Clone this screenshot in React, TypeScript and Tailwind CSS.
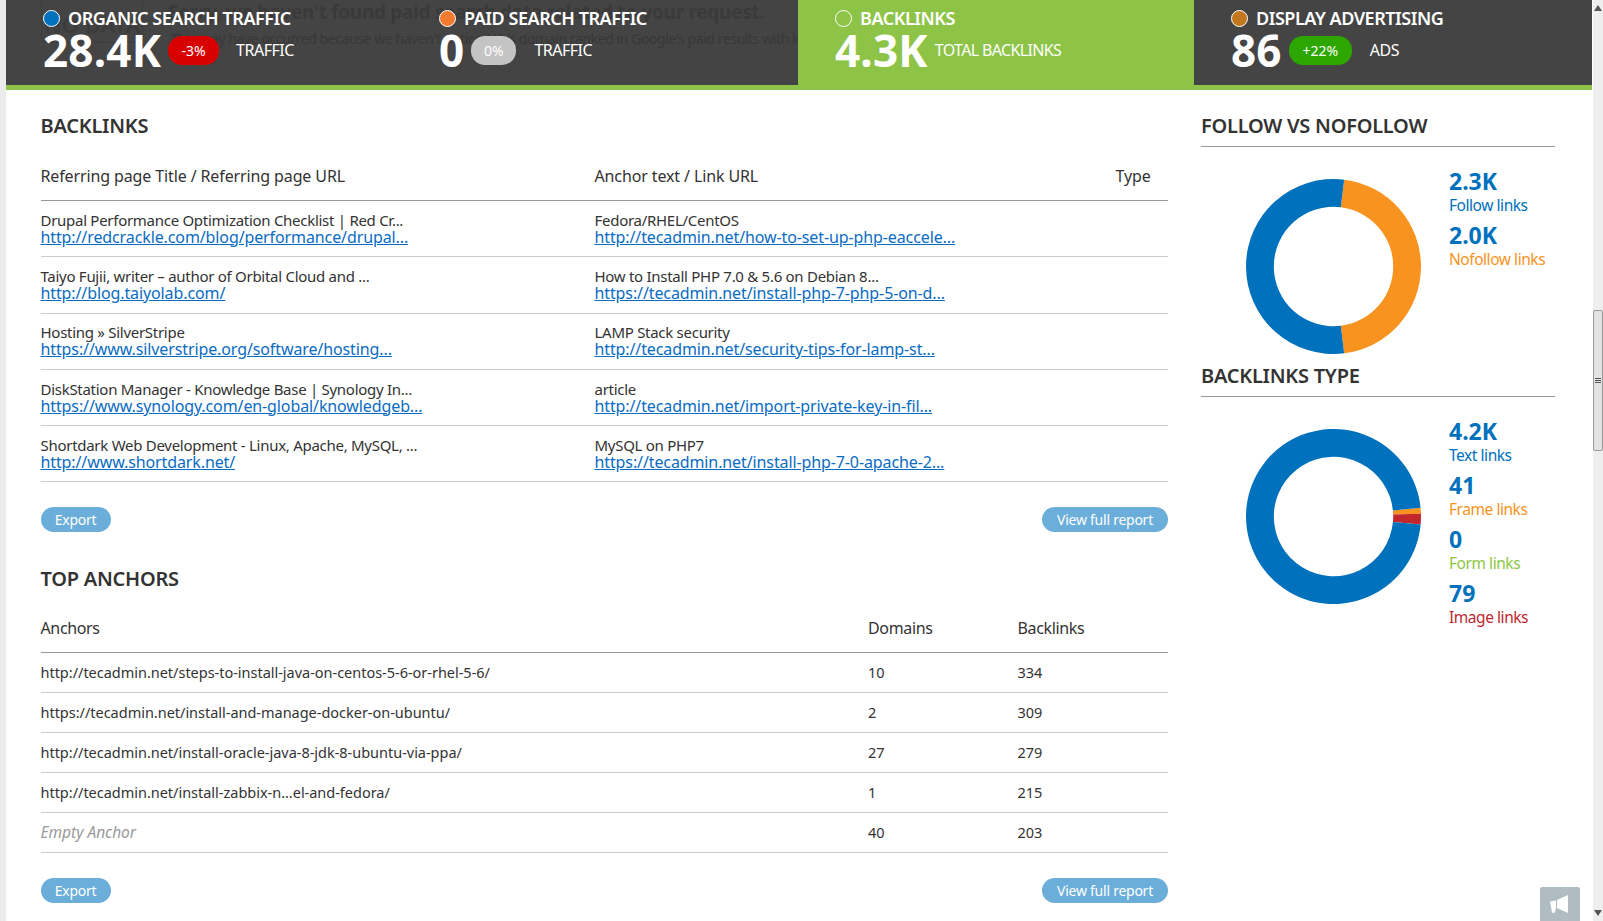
import React from "react";

function pt(cx: number, cy: number, r: number, deg: number) {
  const a = ((deg - 90) * Math.PI) / 180;
  return [cx + r * Math.cos(a), cy + r * Math.sin(a)];
}
function arc(from: number, to: number) {
  const c = 87.5, R = 87.5, r = 59.7;
  const large = to - from > 180 ? 1 : 0;
  const [a, b] = pt(c, c, R, from);
  const [d, e] = pt(c, c, R, to);
  const [f, g] = pt(c, c, r, to);
  const [h, i] = pt(c, c, r, from);
  return `M${a} ${b}A${R} ${R} 0 ${large} 1 ${d} ${e}L${f} ${g}A${r} ${r} 0 ${large} 0 ${h} ${i}Z`;
}
function Donut({ slices }: { slices: [number, number, string][] }) {
  return (
    <svg width="175" height="175" viewBox="0 0 175 175" className="ml-[45px] mt-[32px] shrink-0">
      {slices.map(([a, b, c], i) => <path key={i} d={arc(a, b)} fill={c} />)}
    </svg>
  );
}

function Cell({ dot, label, value, badge, badgeCls, sub, active, subCls }: { dot: string; label: string; value: string; badge?: string; badgeCls?: string; sub: string; active?: boolean; subCls: string }) {
  return (
    <div className={`relative h-[85px] pl-[37px] text-white ${active ? "bg-[#8dc447]" : ""}`}>
      <div className="flex h-[34px] items-center pt-[1px]">
        <span className="h-[17px] w-[17px] translate-y-[1px] rounded-full border border-white" style={{ backgroundColor: dot }} />
        <span className="ml-[8px] text-[18px] font-semibold leading-none tracking-[-0.46px]">{label}</span>
      </div>
      <div className="flex h-[32px] items-center">
        <span className="text-[44px] font-bold leading-none tracking-[0.2px]">{value}</span>
        {badge ? <span className={`ml-[7px] flex h-[29px] items-center justify-center rounded-[14px] text-[14px] ${badgeCls}`}>{badge}</span> : null}
        <span className={`text-[16px] ${subCls}`}>{sub}</span>
      </div>
    </div>
  );
}

function H2({ children, rule }: { children: React.ReactNode; rule?: boolean }) {
  return (
    <h2 className={`text-[20px] font-semibold leading-[28px] tracking-[-0.25px] text-[#333] ${rule ? "h-[35px] border-b border-[#999]" : "h-[28px]"}`}>{children}</h2>
  );
}
function Btn({ children, w }: { children: React.ReactNode; w: string }) {
  return <button className={`flex h-[25px] items-center justify-center rounded-full bg-[#6baed9] text-[14px] tracking-[-0.25px] text-white ${w}`}>{children}</button>;
}
function Stat({ n, label, c }: { n: string; label: string; c: string }) {
  return (
    <div className="h-[54px]">
      <div className="h-[26px] text-[23px] font-bold leading-[26px] text-[#0071bc]">{n}</div>
      <div className={`h-[22px] text-[15.5px] leading-[22px] tracking-[-0.45px] ${c}`}>{label}</div>
    </div>
  );
}

const backlinks = [
  ["Drupal Performance Optimization Checklist | Red Cr...", "http://redcrackle.com/blog/performance/drupal...", "Fedora/RHEL/CentOS", "http://tecadmin.net/how-to-set-up-php-eaccele..."],
  ["Taiyo Fujii, writer – author of Orbital Cloud and ...", "http://blog.taiyolab.com/", "How to Install PHP 7.0 & 5.6 on Debian 8...", "https://tecadmin.net/install-php-7-php-5-on-d..."],
  ["Hosting » SilverStripe", "https://www.silverstripe.org/software/hosting...", "LAMP Stack security", "http://tecadmin.net/security-tips-for-lamp-st..."],
  ["DiskStation Manager - Knowledge Base | Synology In...", "https://www.synology.com/en-global/knowledgeb...", "article", "http://tecadmin.net/import-private-key-in-fil..."],
  ["Shortdark Web Development - Linux, Apache, MySQL, ...", "http://www.shortdark.net/", "MySQL on PHP7", "https://tecadmin.net/install-php-7-0-apache-2..."],
];
const anchors = [
  ["http://tecadmin.net/steps-to-install-java-on-centos-5-6-or-rhel-5-6/", "10", "334"],
  ["https://tecadmin.net/install-and-manage-docker-on-ubuntu/", "2", "309"],
  ["http://tecadmin.net/install-oracle-java-8-jdk-8-ubuntu-via-ppa/", "27", "279"],
  ["http://tecadmin.net/install-zabbix-n...el-and-fedora/", "1", "215"],
  ["Empty Anchor", "40", "203"],
];

function Pair({ a, b }: { a: string; b: string }) {
  return (
    <div className="flex flex-col justify-center">
      <div className="mb-[1px] whitespace-nowrap text-[15px] leading-[15px] tracking-[-0.28px] text-[#333]">{a}</div>
      <a className="whitespace-nowrap text-[16px] leading-[16px] tracking-[-0.11px] text-[#0a6cc4] underline">{b}</a>
    </div>
  );
}

export default function App() {
  return (
    <div className="relative flex h-[921px] overflow-hidden bg-white font-['Noto_Sans',sans-serif]">
      <div className="w-[6px] shrink-0 bg-[#ebebeb]" />
      <div className="w-[1587px] shrink-0">
        <div className="relative h-[90px] w-[1586px] overflow-hidden border-b-[5px] border-[#8dc447] bg-[#444]">
          <div className="absolute left-[35px] top-[-8px] flex h-[51px] w-[102px] items-end justify-center rounded-[4px] border border-[#3d3d3d] pb-[1px] text-[22px] font-bold text-[#3d3d3d]">NO DATA</div>
          <div className="absolute left-[162px] top-[-2px] whitespace-nowrap text-[19px] font-bold leading-[28px] tracking-[-0.3px] text-[#3a3a3a]">Sorry, we haven't found paid search data related to your request.</div>
          <div className="absolute left-[164px] top-[29px] w-[628px] overflow-hidden whitespace-nowrap text-[14px] leading-[20px] tracking-[-0.42px] text-[#383838]">This may have occurred because we haven't noticed this domain ranked in Google's paid results with keywords</div>
          <div className="relative grid grid-cols-[396px_396px_396px_1fr]">
            <Cell dot="#0071bc" label="ORGANIC SEARCH TRAFFIC" value="28.4K" badge="-3%" badgeCls="w-[51px] bg-[#d80000]" sub="TRAFFIC" subCls="ml-[17px] tracking-[-0.5px]" />
            <Cell dot="#f47b30" label="PAID SEARCH TRAFFIC" value="0" badge="0%" badgeCls="w-[45px] bg-[#c4c4c4]" sub="TRAFFIC" subCls="ml-[18px] tracking-[-0.5px]" />
            <Cell dot="transparent" active label="BACKLINKS" value="4.3K" sub="TOTAL BACKLINKS" subCls="ml-[7px] tracking-[-0.65px]" />
            <div className="bg-[#444]">
              <Cell dot="#c1781f" label="DISPLAY ADVERTISING" value="86" badge="+22%" badgeCls="w-[63px] bg-[#2ea600]" sub="ADS" subCls="ml-[18px] tracking-[-0.5px]" />
            </div>
          </div>
        </div>

        <div className="flex pl-[34.5px]">
          <div className="w-[1127.5px] shrink-0 pt-[22px]">
            <H2>BACKLINKS</H2>
            <div className="grid h-[61px] grid-cols-[554px_521px_1fr] items-center border-b border-[#999] pt-[12px] text-[16px] tracking-[-0.12px] text-[#333]">
              <div>Referring page Title / Referring page URL</div>
              <div>Anchor text / Link URL</div>
              <div>Type</div>
            </div>
            {backlinks.map((r) => (
              <div key={r[1]} className="grid h-[56.3px] grid-cols-[554px_521px_1fr] border-b border-[#ccc]">
                <Pair a={r[0]} b={r[1]} />
                <Pair a={r[2]} b={r[3]} />
              </div>
            ))}
            <div className="mt-[25px] flex justify-between">
              <Btn w="w-[70px]">Export</Btn>
              <Btn w="w-[126px]">View full report</Btn>
            </div>
            <div className="mt-[33px]"><H2>TOP ANCHORS</H2></div>
            <div className="grid h-[60px] grid-cols-[827.5px_149.5px_1fr] items-center border-b border-[#999] pt-[11px] text-[16px] tracking-[-0.35px] text-[#333]">
              <div>Anchors</div>
              <div>Domains</div>
              <div>Backlinks</div>
            </div>
            {anchors.map((r) => (
              <div key={r[0]} className="grid h-[39.9px] grid-cols-[827.5px_149.5px_1fr] items-center border-b border-[#ccc] text-[14.5px] text-[#333]">
                <div className={r[0] === "Empty Anchor" ? "text-[15.5px] italic text-[#999]" : "tracking-[-0.02px]"}>{r[0]}</div>
                <div>{r[1]}</div>
                <div>{r[2]}</div>
              </div>
            ))}
            <div className="mt-[25.5px] flex justify-between">
              <Btn w="w-[70px]">Export</Btn>
              <Btn w="w-[126px]">View full report</Btn>
            </div>
          </div>

          <div className="ml-[33px] w-[354px] shrink-0 pt-[22px]">
            <H2 rule>FOLLOW VS NOFOLLOW</H2>
            <div className="flex h-[207px] items-start">
              <Donut slices={[[7, 173, "#f7931e"], [173, 367, "#0071bc"]]} />
              <div className="ml-[28px] mt-[20.5px] w-[110px]">
                <Stat n="2.3K" label="Follow links" c="text-[#0071bc]" />
                <Stat n="2.0K" label="Nofollow links" c="text-[#f7931e]" />
              </div>
            </div>
            <div className="mt-[8px]"><H2 rule>BACKLINKS TYPE</H2></div>
            <div className="flex items-start">
              <Donut slices={[[84.3, 88.2, "#f7931e"], [88.2, 95.3, "#c1272d"], [95.3, 444.3, "#0071bc"]]} />
              <div className="ml-[28px] mt-[20.5px] w-[110px]">
                <Stat n="4.2K" label="Text links" c="text-[#0071bc]" />
                <Stat n="41" label="Frame links" c="text-[#f7931e]" />
                <Stat n="0" label="Form links" c="text-[#8cc63f]" />
                <Stat n="79" label="Image links" c="text-[#c1272d]" />
              </div>
            </div>
          </div>
        </div>
      </div>

      <div className="flex h-[921px] w-[10px] shrink-0 flex-col items-center bg-[#eeeeee]">
        <svg width="8" height="6" viewBox="0 0 8 6" className="mt-[5px]"><path d="M4 0L8 6H0Z" fill="#555" /></svg>
        <div className="mt-[299px] flex h-[141px] w-[10px] flex-col items-center justify-center gap-[1px] rounded-[2px] border border-[#999] bg-[#e2e2e2]">
          <div className="h-[1px] w-[6px] bg-[#555]" />
          <div className="h-[1px] w-[6px] bg-[#555]" />
          <div className="h-[1px] w-[6px] bg-[#555]" />
        </div>
        <div className="flex-1" />
        <svg width="8" height="6" viewBox="0 0 8 6" className="mb-[5px]"><path d="M0 0H8L4 6Z" fill="#555" /></svg>
      </div>

      <div className="absolute bottom-0 left-[1540px] h-[34px] w-[40px] rounded-t-[2px] bg-[#afbdc2]">
        <svg width="40" height="34" viewBox="0 0 40 34" fill="#fff">
          <path d="M17 13L28 8V26L17 21Z" />
          <path d="M10 14.5L16 13.5V21.5L14.5 26L12 25.5L11 20Z" />
        </svg>
      </div>
    </div>
  );
}
